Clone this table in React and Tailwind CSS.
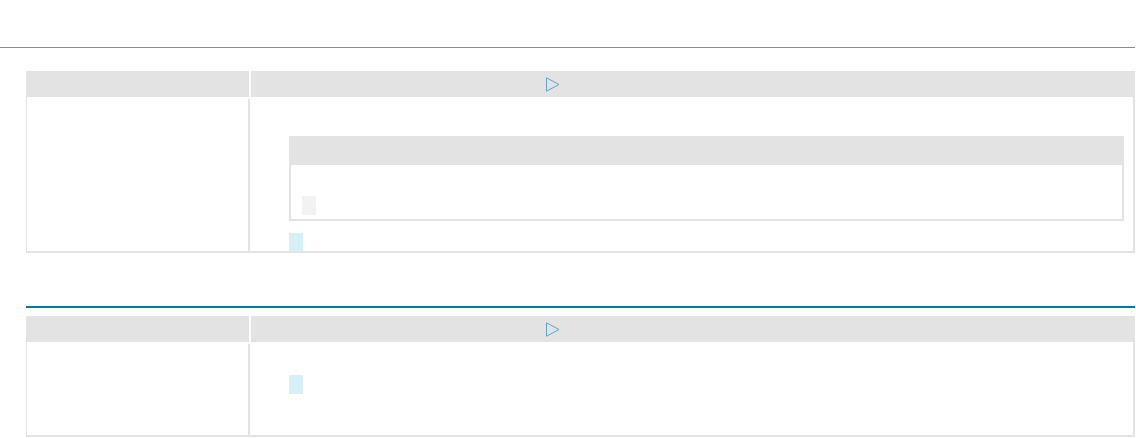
import React from "react";

function PlayIcon() {
  return (
    <svg width="14" height="15" viewBox="0 0 14 15" className="block">
      <path d="M0.5 0.8 L13 7.5 L0.5 14.2 Z" fill="none" stroke="#5aa6c8" strokeWidth="1" />
    </svg>
  );
}

function HeaderRow() {
  return (
    <div className="flex gap-[2px] h-[26px]">
      <div className="w-[223px] bg-[#e3e3e3]" />
      <div className="flex-1 bg-[#e3e3e3] flex items-center pl-[295px]">
        <PlayIcon />
      </div>
    </div>
  );
}

export default function App() {
  return (
    <div className="w-[1136px] h-[438px] bg-white relative font-['Liberation_Sans',sans-serif]">
      <div className="h-[47px]" />
      <div className="w-[1135px] h-px bg-[#8c8c8c]" />

      {/* first block */}
      <div className="ml-[26px] w-[1109px] mt-[23px]">
        <HeaderRow />
        <div className="flex h-[156px] border-l border-b-2 border-r-2 border-[#e3e3e3]">
          <div className="w-[223px] mt-[2px] border-r-2 border-[#e3e3e3]" />
          <div className="flex-1 pl-[39px] pt-[39px] flex flex-col">
            <div className="w-[835px] border-2 border-t-0 border-[#e3e3e3]">
              <div className="h-[29px] bg-[#e3e3e3]" />
              <div className="h-[54px] pl-[11px] pt-[31px]">
                <div className="w-[14px] h-[19px] bg-[#f2f2f2]" />
              </div>
            </div>
            <div className="mt-[12px] w-[14px] h-[19px] bg-[#d6f0fa]" />
          </div>
        </div>
      </div>

      {/* second block */}
      <div className="ml-[26px] w-[1109px] mt-[53px]">
        <div className="h-[2px] bg-[#0077b0]" />
        <div className="h-[8px]" />
        <HeaderRow />
        <div className="flex h-[95px] border-l border-b-2 border-r-2 border-[#e3e3e3]">
          <div className="w-[223px] mt-[2px] border-r-2 border-[#e3e3e3]" />
          <div className="flex-1 pl-[39px] pt-[33px]">
            <div className="w-[14px] h-[19px] bg-[#d6f0fa]" />
          </div>
        </div>
      </div>
    </div>
  );
}
